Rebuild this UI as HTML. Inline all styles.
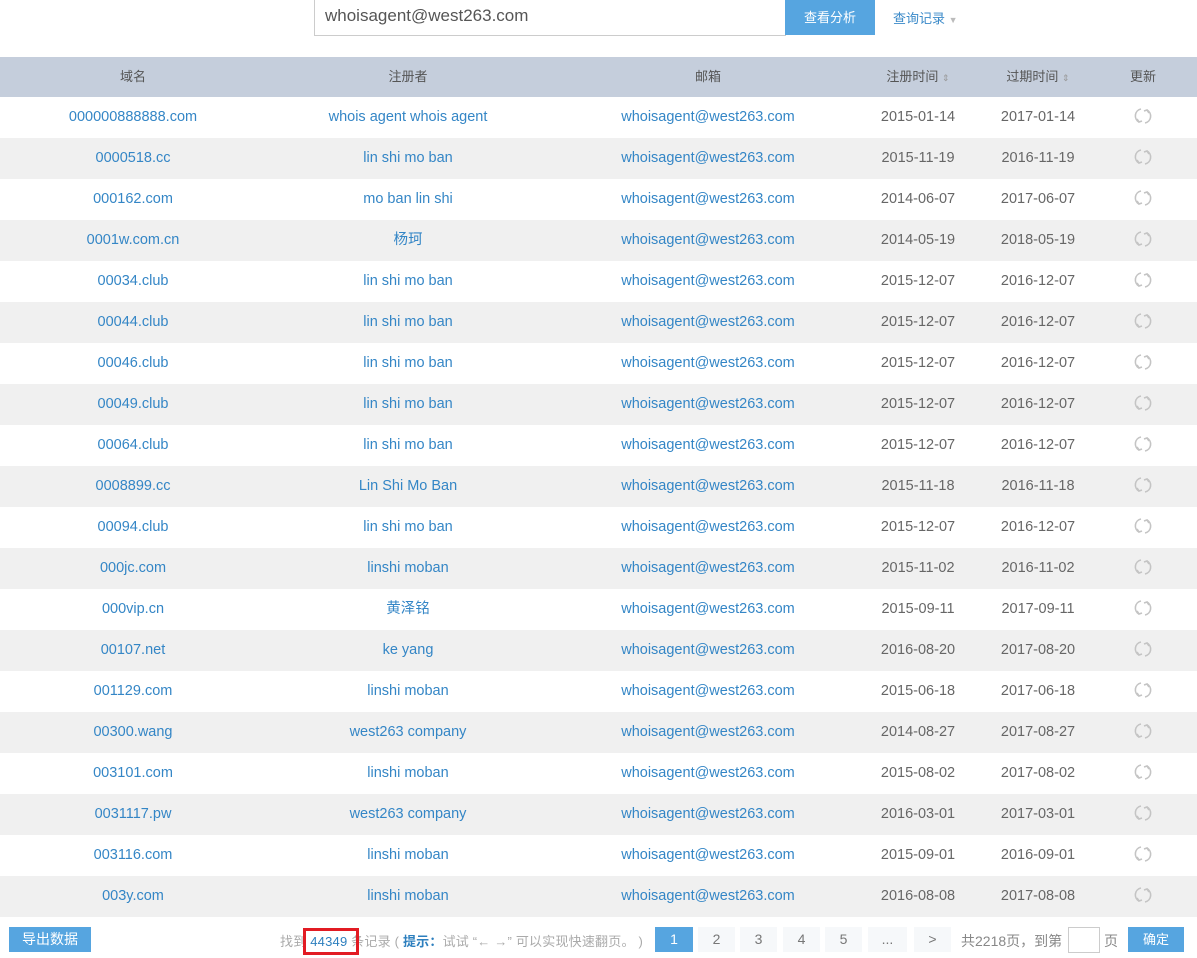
<!DOCTYPE html>
<html><head><meta charset="utf-8"><style>
*{margin:0;padding:0;box-sizing:border-box}
body{width:1197px;height:958px;background:#fff;font-family:"Liberation Sans","Noto Sans CJK SC",sans-serif;font-size:13px;position:relative;overflow:hidden;color:#666}
.abs{position:absolute}
#inp{left:314px;top:0;width:472px;height:36px;border:1px solid #ccc;border-top:none;font-size:17px;color:#555;padding:6px 10px}
#btn{left:785px;top:0;width:90px;height:35px;background:#56a5e0;color:#fff;text-align:center;line-height:35px;font-size:13px}
#rec{left:893px;top:8px;color:#3b8ac9;font-size:13px}
#rec span{color:#bbb;font-size:9px}
#hd{left:0;top:57px;width:1197px;height:40px;background:#c5cedc;color:#555}
.row{position:absolute;left:0;width:1197px;height:41px;font-size:14.5px}
.row.g{background:#f0f0f0}
.c{position:absolute;top:0;line-height:41px;text-align:center;white-space:nowrap}
#hd .c{line-height:40px}
.c1{left:0;width:266px}.c2{left:258px;width:300px}.c3{left:558px;width:300px}
.c4{left:868px;width:100px}.c5{left:988px;width:100px}.c6{left:1118px;width:50px}
.row .c1,.row .c2,.row .c3{color:#3486c6}
.row .c4,.row .c5{color:#666}
.c6 svg{vertical-align:middle;margin-top:-2px}
.s{font-size:9px;color:#999}
#exp{left:9px;top:927px;width:82px;height:25px;background:#56a5e0;color:#fff;text-align:center;line-height:25px;font-size:14px}
#info{left:280px;top:931px;color:#aaa;font-size:13px;letter-spacing:.2px}
#info b{color:#2d7fbe;font-weight:bold}
#info .n{color:#2d7fbe}
#red{left:303px;top:928px;width:56px;height:27px;border:3px solid #e21b23}
.pg{position:absolute;top:927px;height:25px;line-height:25px;text-align:center;background:#f6f8fa;color:#777;width:37px;font-size:14px}
.pg.a{background:#56a5e0;color:#fff}
</style></head><body>
<div class="abs" id="inp">whoisagent@west263.com</div>
<div class="abs" id="btn">查看分析</div>
<div class="abs" id="rec">查询记录 <span>▼</span></div>
<div class="abs" id="hd">
<div class="c c1">域名</div><div class="c c2">注册者</div><div class="c c3">邮箱</div>
<div class="c c4">注册时间 <span class="s">⇕</span></div><div class="c c5">过期时间 <span class="s">⇕</span></div><div class="c c6">更新</div>
</div>
<div class="row" style="top:97px"><div class="c c1">000000888888.com</div><div class="c c2">whois agent whois agent</div><div class="c c3">whoisagent@west263.com</div><div class="c c4">2015-01-14</div><div class="c c5">2017-01-14</div><div class="c c6"><svg width="20" height="20" viewBox="0 0 20 20" fill="none" stroke="#c4c4c4" stroke-width="1.6"><path d="M8 3A7 7 0 0 0 6 16"/><path d="M12 17A7 7 0 0 0 14 4"/><path d="M4 13l2 3 3-1"/><path d="M16 7l-2-3-3 1"/></svg></div></div>
<div class="row g" style="top:138px"><div class="c c1">0000518.cc</div><div class="c c2">lin shi mo ban</div><div class="c c3">whoisagent@west263.com</div><div class="c c4">2015-11-19</div><div class="c c5">2016-11-19</div><div class="c c6"><svg width="20" height="20" viewBox="0 0 20 20" fill="none" stroke="#c4c4c4" stroke-width="1.6"><path d="M8 3A7 7 0 0 0 6 16"/><path d="M12 17A7 7 0 0 0 14 4"/><path d="M4 13l2 3 3-1"/><path d="M16 7l-2-3-3 1"/></svg></div></div>
<div class="row" style="top:179px"><div class="c c1">000162.com</div><div class="c c2">mo ban lin shi</div><div class="c c3">whoisagent@west263.com</div><div class="c c4">2014-06-07</div><div class="c c5">2017-06-07</div><div class="c c6"><svg width="20" height="20" viewBox="0 0 20 20" fill="none" stroke="#c4c4c4" stroke-width="1.6"><path d="M8 3A7 7 0 0 0 6 16"/><path d="M12 17A7 7 0 0 0 14 4"/><path d="M4 13l2 3 3-1"/><path d="M16 7l-2-3-3 1"/></svg></div></div>
<div class="row g" style="top:220px"><div class="c c1">0001w.com.cn</div><div class="c c2">杨珂</div><div class="c c3">whoisagent@west263.com</div><div class="c c4">2014-05-19</div><div class="c c5">2018-05-19</div><div class="c c6"><svg width="20" height="20" viewBox="0 0 20 20" fill="none" stroke="#c4c4c4" stroke-width="1.6"><path d="M8 3A7 7 0 0 0 6 16"/><path d="M12 17A7 7 0 0 0 14 4"/><path d="M4 13l2 3 3-1"/><path d="M16 7l-2-3-3 1"/></svg></div></div>
<div class="row" style="top:261px"><div class="c c1">00034.club</div><div class="c c2">lin shi mo ban</div><div class="c c3">whoisagent@west263.com</div><div class="c c4">2015-12-07</div><div class="c c5">2016-12-07</div><div class="c c6"><svg width="20" height="20" viewBox="0 0 20 20" fill="none" stroke="#c4c4c4" stroke-width="1.6"><path d="M8 3A7 7 0 0 0 6 16"/><path d="M12 17A7 7 0 0 0 14 4"/><path d="M4 13l2 3 3-1"/><path d="M16 7l-2-3-3 1"/></svg></div></div>
<div class="row g" style="top:302px"><div class="c c1">00044.club</div><div class="c c2">lin shi mo ban</div><div class="c c3">whoisagent@west263.com</div><div class="c c4">2015-12-07</div><div class="c c5">2016-12-07</div><div class="c c6"><svg width="20" height="20" viewBox="0 0 20 20" fill="none" stroke="#c4c4c4" stroke-width="1.6"><path d="M8 3A7 7 0 0 0 6 16"/><path d="M12 17A7 7 0 0 0 14 4"/><path d="M4 13l2 3 3-1"/><path d="M16 7l-2-3-3 1"/></svg></div></div>
<div class="row" style="top:343px"><div class="c c1">00046.club</div><div class="c c2">lin shi mo ban</div><div class="c c3">whoisagent@west263.com</div><div class="c c4">2015-12-07</div><div class="c c5">2016-12-07</div><div class="c c6"><svg width="20" height="20" viewBox="0 0 20 20" fill="none" stroke="#c4c4c4" stroke-width="1.6"><path d="M8 3A7 7 0 0 0 6 16"/><path d="M12 17A7 7 0 0 0 14 4"/><path d="M4 13l2 3 3-1"/><path d="M16 7l-2-3-3 1"/></svg></div></div>
<div class="row g" style="top:384px"><div class="c c1">00049.club</div><div class="c c2">lin shi mo ban</div><div class="c c3">whoisagent@west263.com</div><div class="c c4">2015-12-07</div><div class="c c5">2016-12-07</div><div class="c c6"><svg width="20" height="20" viewBox="0 0 20 20" fill="none" stroke="#c4c4c4" stroke-width="1.6"><path d="M8 3A7 7 0 0 0 6 16"/><path d="M12 17A7 7 0 0 0 14 4"/><path d="M4 13l2 3 3-1"/><path d="M16 7l-2-3-3 1"/></svg></div></div>
<div class="row" style="top:425px"><div class="c c1">00064.club</div><div class="c c2">lin shi mo ban</div><div class="c c3">whoisagent@west263.com</div><div class="c c4">2015-12-07</div><div class="c c5">2016-12-07</div><div class="c c6"><svg width="20" height="20" viewBox="0 0 20 20" fill="none" stroke="#c4c4c4" stroke-width="1.6"><path d="M8 3A7 7 0 0 0 6 16"/><path d="M12 17A7 7 0 0 0 14 4"/><path d="M4 13l2 3 3-1"/><path d="M16 7l-2-3-3 1"/></svg></div></div>
<div class="row g" style="top:466px"><div class="c c1">0008899.cc</div><div class="c c2">Lin Shi Mo Ban</div><div class="c c3">whoisagent@west263.com</div><div class="c c4">2015-11-18</div><div class="c c5">2016-11-18</div><div class="c c6"><svg width="20" height="20" viewBox="0 0 20 20" fill="none" stroke="#c4c4c4" stroke-width="1.6"><path d="M8 3A7 7 0 0 0 6 16"/><path d="M12 17A7 7 0 0 0 14 4"/><path d="M4 13l2 3 3-1"/><path d="M16 7l-2-3-3 1"/></svg></div></div>
<div class="row" style="top:507px"><div class="c c1">00094.club</div><div class="c c2">lin shi mo ban</div><div class="c c3">whoisagent@west263.com</div><div class="c c4">2015-12-07</div><div class="c c5">2016-12-07</div><div class="c c6"><svg width="20" height="20" viewBox="0 0 20 20" fill="none" stroke="#c4c4c4" stroke-width="1.6"><path d="M8 3A7 7 0 0 0 6 16"/><path d="M12 17A7 7 0 0 0 14 4"/><path d="M4 13l2 3 3-1"/><path d="M16 7l-2-3-3 1"/></svg></div></div>
<div class="row g" style="top:548px"><div class="c c1">000jc.com</div><div class="c c2">linshi moban</div><div class="c c3">whoisagent@west263.com</div><div class="c c4">2015-11-02</div><div class="c c5">2016-11-02</div><div class="c c6"><svg width="20" height="20" viewBox="0 0 20 20" fill="none" stroke="#c4c4c4" stroke-width="1.6"><path d="M8 3A7 7 0 0 0 6 16"/><path d="M12 17A7 7 0 0 0 14 4"/><path d="M4 13l2 3 3-1"/><path d="M16 7l-2-3-3 1"/></svg></div></div>
<div class="row" style="top:589px"><div class="c c1">000vip.cn</div><div class="c c2">黄泽铭</div><div class="c c3">whoisagent@west263.com</div><div class="c c4">2015-09-11</div><div class="c c5">2017-09-11</div><div class="c c6"><svg width="20" height="20" viewBox="0 0 20 20" fill="none" stroke="#c4c4c4" stroke-width="1.6"><path d="M8 3A7 7 0 0 0 6 16"/><path d="M12 17A7 7 0 0 0 14 4"/><path d="M4 13l2 3 3-1"/><path d="M16 7l-2-3-3 1"/></svg></div></div>
<div class="row g" style="top:630px"><div class="c c1">00107.net</div><div class="c c2">ke yang</div><div class="c c3">whoisagent@west263.com</div><div class="c c4">2016-08-20</div><div class="c c5">2017-08-20</div><div class="c c6"><svg width="20" height="20" viewBox="0 0 20 20" fill="none" stroke="#c4c4c4" stroke-width="1.6"><path d="M8 3A7 7 0 0 0 6 16"/><path d="M12 17A7 7 0 0 0 14 4"/><path d="M4 13l2 3 3-1"/><path d="M16 7l-2-3-3 1"/></svg></div></div>
<div class="row" style="top:671px"><div class="c c1">001129.com</div><div class="c c2">linshi moban</div><div class="c c3">whoisagent@west263.com</div><div class="c c4">2015-06-18</div><div class="c c5">2017-06-18</div><div class="c c6"><svg width="20" height="20" viewBox="0 0 20 20" fill="none" stroke="#c4c4c4" stroke-width="1.6"><path d="M8 3A7 7 0 0 0 6 16"/><path d="M12 17A7 7 0 0 0 14 4"/><path d="M4 13l2 3 3-1"/><path d="M16 7l-2-3-3 1"/></svg></div></div>
<div class="row g" style="top:712px"><div class="c c1">00300.wang</div><div class="c c2">west263 company</div><div class="c c3">whoisagent@west263.com</div><div class="c c4">2014-08-27</div><div class="c c5">2017-08-27</div><div class="c c6"><svg width="20" height="20" viewBox="0 0 20 20" fill="none" stroke="#c4c4c4" stroke-width="1.6"><path d="M8 3A7 7 0 0 0 6 16"/><path d="M12 17A7 7 0 0 0 14 4"/><path d="M4 13l2 3 3-1"/><path d="M16 7l-2-3-3 1"/></svg></div></div>
<div class="row" style="top:753px"><div class="c c1">003101.com</div><div class="c c2">linshi moban</div><div class="c c3">whoisagent@west263.com</div><div class="c c4">2015-08-02</div><div class="c c5">2017-08-02</div><div class="c c6"><svg width="20" height="20" viewBox="0 0 20 20" fill="none" stroke="#c4c4c4" stroke-width="1.6"><path d="M8 3A7 7 0 0 0 6 16"/><path d="M12 17A7 7 0 0 0 14 4"/><path d="M4 13l2 3 3-1"/><path d="M16 7l-2-3-3 1"/></svg></div></div>
<div class="row g" style="top:794px"><div class="c c1">0031117.pw</div><div class="c c2">west263 company</div><div class="c c3">whoisagent@west263.com</div><div class="c c4">2016-03-01</div><div class="c c5">2017-03-01</div><div class="c c6"><svg width="20" height="20" viewBox="0 0 20 20" fill="none" stroke="#c4c4c4" stroke-width="1.6"><path d="M8 3A7 7 0 0 0 6 16"/><path d="M12 17A7 7 0 0 0 14 4"/><path d="M4 13l2 3 3-1"/><path d="M16 7l-2-3-3 1"/></svg></div></div>
<div class="row" style="top:835px"><div class="c c1">003116.com</div><div class="c c2">linshi moban</div><div class="c c3">whoisagent@west263.com</div><div class="c c4">2015-09-01</div><div class="c c5">2016-09-01</div><div class="c c6"><svg width="20" height="20" viewBox="0 0 20 20" fill="none" stroke="#c4c4c4" stroke-width="1.6"><path d="M8 3A7 7 0 0 0 6 16"/><path d="M12 17A7 7 0 0 0 14 4"/><path d="M4 13l2 3 3-1"/><path d="M16 7l-2-3-3 1"/></svg></div></div>
<div class="row g" style="top:876px"><div class="c c1">003y.com</div><div class="c c2">linshi moban</div><div class="c c3">whoisagent@west263.com</div><div class="c c4">2016-08-08</div><div class="c c5">2017-08-08</div><div class="c c6"><svg width="20" height="20" viewBox="0 0 20 20" fill="none" stroke="#c4c4c4" stroke-width="1.6"><path d="M8 3A7 7 0 0 0 6 16"/><path d="M12 17A7 7 0 0 0 14 4"/><path d="M4 13l2 3 3-1"/><path d="M16 7l-2-3-3 1"/></svg></div></div>

<div class="abs" id="exp">导出数据</div>
<div class="abs" id="info">找到 <span class="n">44349</span> 条记录 ( <b>提示：</b>试试 “← →” 可以实现快速翻页。 )</div>
<div class="abs" id="red"></div>
<div class="pg a" style="left:655px;width:38px">1</div>
<div class="pg" style="left:698px">2</div>
<div class="pg" style="left:740px">3</div>
<div class="pg" style="left:783px">4</div>
<div class="pg" style="left:825px">5</div>
<div class="pg" style="left:868px;width:39px">...</div>
<div class="pg" style="left:914px">&gt;</div>
<div class="abs" style="left:961px;top:931px;color:#888;font-size:14px">共2218页，到第</div>
<div class="abs" style="left:1068px;top:927px;width:32px;height:26px;border:1px solid #ccc"></div>
<div class="abs" style="left:1104px;top:931px;color:#888;font-size:14px">页</div>
<div class="abs" style="left:1128px;top:927px;width:56px;height:25px;background:#56a5e0;color:#fff;text-align:center;line-height:25px">确定</div>
</body></html>
